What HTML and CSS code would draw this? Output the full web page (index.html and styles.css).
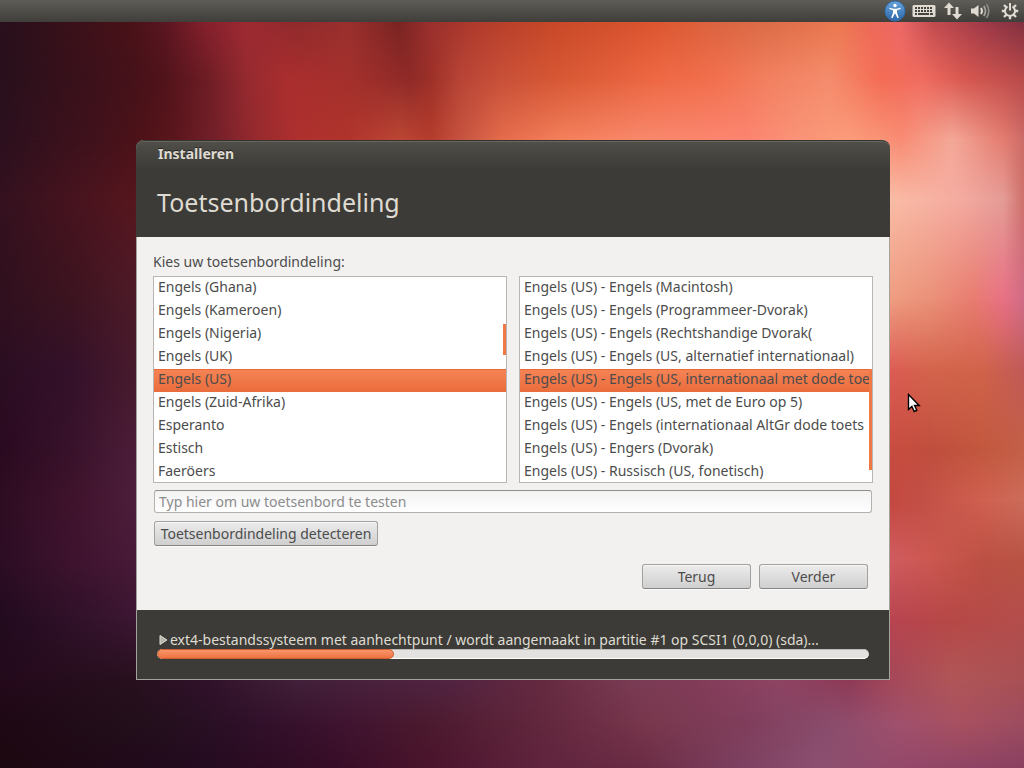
FILE: index.html
```html
<!DOCTYPE html>
<html lang="nl">
<head>
  <meta charset="UTF-8">
  <meta name="viewport" content="width=device-width, initial-scale=1.0">
  <title>Installeren</title>
  <link rel="stylesheet" href="styles.css">
</head>
<body>
  <div class="wallpaper" aria-hidden="true">
    <div class="band band-1"></div>
    <div class="band band-2"></div>
    <div class="band band-3"></div>
    <div class="band band-4"></div>
    <div class="band band-5"></div>
    <div class="band band-6"></div>
    <div class="band band-7"></div>
    <div class="band band-8"></div>
    <div class="band band-9"></div>
    <div class="band band-10"></div>
    <div class="band band-11"></div>
    <div class="band band-12"></div>
  </div>

  <header class="panel">
    <button class="indicator" aria-label="Toegankelijkheid">
      <svg width="22" height="22" viewBox="0 0 22 22">
        <defs>
          <linearGradient id="blue" x1="0" y1="0" x2="0" y2="1">
            <stop offset="0" stop-color="#6aa4dc"/>
            <stop offset="1" stop-color="#2c66a8"/>
          </linearGradient>
        </defs>
        <circle cx="11" cy="11" r="10" fill="url(#blue)" stroke="#2f6fb4"/>
        <circle cx="11" cy="5.500" r="1.700" fill="#fff"/>
        <path d="M5.500 7.800l4 1h3l4-1 .2 1.200-3.700 1.300v2.400l1.800 5-1.300.5-2.300-4.700h-.4l-2.300 4.700-1.300-.5 1.800-5v-2.400L5.300 9z" fill="#fff"/>
      </svg>
    </button>
    <button class="indicator" aria-label="Toetsenbord">
      <svg width="24" height="14" viewBox="0 0 24 14">
        <rect x="0.500" y="1" width="23" height="12" rx="1.500" fill="#dfdbd2"/>
        <path d="M3 4h18M3 7h18" stroke="#45443f" stroke-width="2" stroke-dasharray="2 1"/>
        <path d="M3 10h2M6 10h11M18 10h3" stroke="#45443f" stroke-width="2"/>
      </svg>
    </button>
    <button class="indicator" aria-label="Netwerk">
      <svg width="18" height="18" viewBox="0 0 18 18" fill="#dfdbd2">
        <path d="M5 0.500l5 5.500H6.500V13h-3V6H0z"/>
        <path d="M11.500 5h3v7H18L13 17.500 8 12h3.500z"/>
      </svg>
    </button>
    <button class="indicator" aria-label="Geluid">
      <svg width="20" height="18" viewBox="0 0 20 18" fill="none">
        <path d="M1 6.500h3L8.500 3v12L4 11.500H1z" fill="#dfdbd2"/>
        <path d="M11 6q2 3 0 6" stroke="#dfdbd2" stroke-width="2"/>
        <path d="M13.800 4q3.400 5 0 10" stroke="#a9a69f" stroke-width="1.700"/>
        <path d="M16.500 2q4.600 7 0 14" stroke="#8b8983" stroke-width="1.700"/>
      </svg>
    </button>
    <button class="indicator" aria-label="Sessie">
      <svg width="18" height="18" viewBox="0 0 18 18" fill="none" stroke="#dfdbd2">
        <path d="M6.500 4.600a5 5 0 1 0 5 0" stroke-width="2"/>
        <path d="M9 1v7.500" stroke-width="2"/>
        <path d="M3 3l2.500 2.500M15 3l-2.500 2.500M0.800 9h3.500M17.200 9h-3.500M3 15l2.500-2.500M15 15l-2.500-2.500M9 13.500v3.700" stroke-width="2.400"/>
      </svg>
    </button>
  </header>

  <main class="desktop">
    <form class="window">
      <div class="window-header">
        <div class="window-title">Installeren</div>
        <h1>Toetsenbordindeling</h1>
      </div>

      <div class="window-body">
        <label class="prompt" for="layout">Kies uw toetsenbordindeling:</label>
        <div class="lists">
          <div class="list">
            <select id="layout" size="9">
              <option>Engels (Ghana)</option>
              <option>Engels (Kameroen)</option>
              <option>Engels (Nigeria)</option>
              <option>Engels (UK)</option>
              <option selected>Engels (US)</option>
              <option>Engels (Zuid-Afrika)</option>
              <option>Esperanto</option>
              <option>Estisch</option>
              <option>Faeröers</option>
            </select>
            <span class="thumb thumb-layout"></span>
          </div>
          <div class="list">
            <select id="variant" size="9" aria-label="Variant">
              <option>Engels (US) - Engels (Macintosh)</option>
              <option>Engels (US) - Engels (Programmeer-Dvorak)</option>
              <option>Engels (US) - Engels (Rechtshandige Dvorak(</option>
              <option>Engels (US) - Engels (US, alternatief internationaal)</option>
              <option selected>Engels (US) - Engels (US, internationaal met dode toe</option>
              <option>Engels (US) - Engels (US, met de Euro op 5)</option>
              <option>Engels (US) - Engels (internationaal AltGr dode toets</option>
              <option>Engels (US) - Engers (Dvorak)</option>
              <option>Engels (US) - Russisch (US, fonetisch)</option>
            </select>
            <span class="thumb thumb-variant"></span>
          </div>
        </div>
        <input class="test-field" type="text" aria-label="Toetsenbord testen" placeholder="Typ hier om uw toetsenbord te testen">
        <button class="btn btn-detect" type="button">Toetsenbordindeling detecteren</button>
        <div class="actions">
          <button class="btn" type="button">Terug</button>
          <button class="btn" type="button">Verder</button>
        </div>
      </div>

      <div class="window-footer">
        <label class="status" for="progress">
          <svg width="9" height="10" viewBox="0 0 9 10">
            <path d="M1 0.500L8 5 1 9.500z" fill="#b5b2aa" stroke="#dfdbd2"/>
          </svg>
          <span>ext4-bestandssysteem met aanhechtpunt / wordt aangemaakt in partitie #1 op SCSI1 (0,0,0) (sda)...</span>
        </label>
        <progress id="progress" value="333" max="1000"></progress>
      </div>
    </form>
  </main>

  <svg class="pointer" width="14" height="21" viewBox="0 0 14 21" aria-hidden="true">
    <path d="M1.500 1.500v15l3.400-3 2.300 5 2.600-1.200-2.200-4.800h4.600z" fill="#fff" stroke="#000" stroke-width="1.400"/>
  </svg>
</body>
</html>
```
FILE: styles.css
```css
:root {
  --row-1: linear-gradient(to right, #28101c 0%, #4a1218 13%, #5a1622 16%, #84202c 20%, #9e2a32 24%, #902a2c 29%, #9a302e 34%, #7a2422 39%, #9a302e 42%, #b23c2c 47%, #c84828 54%, #dc5630 64%, #dc6440 70%, #dc6c48 75%, #ec7850 82%, #ee6a58 85%, #ec6868 88%, #c44c50 91%, #a03a48 96%, #823040 100%);
  --row-2: linear-gradient(to right, #28101c 0%, #46121a 13%, #50131a 16%, #6c1c24 20%, #942a30 24%, #aa2e2e 28%, #a4302c 34%, #8e2a28 40%, #9c3028 42%, #b84436 45%, #c85038 49%, #d85834 55%, #ee6844 64%, #f2704e 70%, #f28060 75%, #f48c6c 81%, #f46c54 86%, #f06c60 90%, #d85850 94%, #b84a4a 100%);
  --row-3: linear-gradient(to right, #2c101e 0%, #40121c 9%, #4e1218 14%, #5a161c 17%, #74202a 21%, #962a2e 25%, #ae302e 29%, #b0342c 34%, #bc4634 39%, #b43c2c 42%, #cc5a44 46%, #e46c4c 49%, #f4805c 55%, #f8886c 63%, #fc8470 73%, #f99478 78%, #fb9c7a 83%, #f88c74 88%, #f4a898 93%, #e47c70 98%, #cc6c68 100%);
  --row-4: linear-gradient(to right, #34111f 0%, #56161e 13%, #fabca6 87%, #f4aaa0 94%, #e49c96 98%, #ce706a 100%);
  --row-5: linear-gradient(to right, #30101e 0%, #3c1420 7%, #4c1a28 13%, #ee9c80 87%, #ea9078 91%, #e87c70 95%, #e87084 98%, #d06c88 100%);
  --row-6: linear-gradient(to right, #2b0e22 0%, #34112a 7%, #471a2c 13%, #dc5c54 87%, #d4644c 91%, #d0634a 96%, #c05a58 100%);
  --row-7: linear-gradient(to right, #2a0a20 0%, #38122a 7%, #4c1d38 13%, #c84c40 87%, #c04e3e 91%, #c2583e 96%, #c46048 100%);
  --row-8: linear-gradient(to right, #2e0d22 0%, #42142e 8%, #4c1e3a 13%, #c44840 87%, #c25046 90%, #d06050 96%, #cc6c5a 100%);
  --row-9: linear-gradient(to right, #2c0d24 0%, #3e132e 7%, #481a38 13%, #d05c60 87%, #cc5850 91%, #bc5044 96%, #b85444 100%);
  --row-10: linear-gradient(to right, #220b1e 0%, #3b1632 13%, #b84450 87%, #b64846 93%, #b44e4c 100%);
  --row-11: linear-gradient(to right, #240a1c 0%, #28101e 13%, #30122a 20%, #42203a 29%, #522442 44%, #662a40 53%, #7a3c54 62%, #823c58 68%, #8e4464 76%, #8e3a56 83%, #a4485a 87%, #b05658 93%, #a85054 100%);
  --row-12: linear-gradient(to right, #1e0814 0%, #24101e 16%, #30102a 25%, #401430 34%, #4c1a2e 42%, #662a40 55%, #7a384e 64%, #803e5c 73%, #8a4c6c 81%, #a0506c 88%, #a85060 94%, #9c4c60 100%);
  --row-13: linear-gradient(to right, #1c0810 0%, #240b20 20%, #360c26 32%, #4a142c 42%, #60243e 53%, #6a2c44 63%, #7c4060 72%, #8c5070 80%, #94486a 88%, #8a4060 100%);
}

* {
  box-sizing: border-box;
}
body {
  margin: 0;
  min-height: 100vh;
  font-family: "Noto Sans", "Open Sans", sans-serif;
  font-size: 14px;
  color: #4c4c4c;
  background: #3c1430;
}
button, input, select {
  font: inherit;
  color: inherit;
}

/* Wallpaper: every band fades from one row of colours into the next */
.wallpaper {
  position: fixed;
  inset: 22px 0 0;
  z-index: -1;
  display: flex;
  flex-direction: column;
}
.band {
  background: var(--from);
}
.band::before {
  content: "";
  display: block;
  height: 100%;
  background: var(--to);
  -webkit-mask-image: linear-gradient(transparent, #000);
  mask-image: linear-gradient(transparent, #000);
}
.band-1 { flex: 56; --from: var(--row-1); --to: var(--row-2); }
.band-2 { flex: 62; --from: var(--row-2); --to: var(--row-3); }
.band-3 { flex: 60; --from: var(--row-3); --to: var(--row-4); }
.band-4 { flex: 100; --from: var(--row-4); --to: var(--row-5); }
.band-5 { flex: 70; --from: var(--row-5); --to: var(--row-6); }
.band-6 { flex: 80; --from: var(--row-6); --to: var(--row-7); }
.band-7 { flex: 50; --from: var(--row-7); --to: var(--row-8); }
.band-8 { flex: 60; --from: var(--row-8); --to: var(--row-9); }
.band-9 { flex: 60; --from: var(--row-9); --to: var(--row-10); }
.band-10 { flex: 60; --from: var(--row-10); --to: var(--row-11); }
.band-11 { flex: 44; --from: var(--row-11); --to: var(--row-12); }
.band-12 { flex: 44; --from: var(--row-12); --to: var(--row-13); }

/* Top panel */
.panel {
  display: flex;
  justify-content: flex-end;
  align-items: center;
  gap: 8px;
  height: 22px;
  padding-right: 5px;
  background: linear-gradient(#5e5d57, #3f3e3a);
}
.indicator {
  display: flex;
  padding: 0;
  border: 0;
  background: none;
}
.indicator:first-child {
  margin-right: -2px;
}
.indicator:last-child {
  margin-left: 3px;
}

/* Installer window */
.desktop {
  display: flex;
  justify-content: center;
  padding: 118px 0 0 2px;
}
.window {
  width: 100%;
  max-width: 754px;
  border: 1px solid #a5a29b;
  border-top: 0;
  border-radius: 8px 8px 0 0;
  background: #f2f1f0;
}
.window-header {
  margin: 0 -1px;
  padding: 0 21px;
  height: 97px;
  border-radius: 8px 8px 0 0;
  border-top: 1px solid #35342f;
  background: linear-gradient(#504f49, #3c3b37 28px);
  box-shadow: inset 0 1px #66655e;
  color: #dfdbd2;
}
.window-title {
  padding-left: 1px;
  line-height: 26px;
  font-weight: bold;
  text-shadow: 0 -1px #22211e;
}
h1 {
  margin: 15px 0 0;
  font-size: 25px;
  font-weight: normal;
  line-height: 40px;
}
.window-body {
  padding: 15px 16px 21px;
}
.prompt {
  display: block;
  line-height: 20px;
  margin-bottom: 4px;
}
.lists {
  display: flex;
  gap: 12px;
}
.list {
  position: relative;
  flex: 1;
  min-width: 0;
}
select {
  display: block;
  width: 100%;
  height: 207px;
  padding: 0;
  border: 1px solid #b8b5b2;
  border-radius: 0;
  background: #fff;
  outline: 0;
  overflow: hidden;
  scrollbar-width: none;
}
option {
  height: 23px;
  min-height: 23px;
  padding: 0 4px;
  line-height: 24px;
}
option:checked {
  color: #4c4c4c;
  background: linear-gradient(#f58455, #ea6c3c);
  box-shadow: inset 0 1px #e8683a;
}
.thumb {
  position: absolute;
  right: 1px;
  width: 3px;
  background: #f07746;
}
.thumb-layout {
  top: 48px;
  height: 31px;
}
.thumb-variant {
  top: 93px;
  height: 101px;
}
.test-field {
  display: block;
  width: calc(100% - 2px);
  height: 23px;
  margin: 7px 1px 8px;
  padding: 0 4px;
  border: 1px solid #b5b2ae;
  border-top-color: #8f8d8a;
  border-radius: 3px;
  background: linear-gradient(#f3f3f3, #fff);
}
.test-field::placeholder {
  color: #8c8c8c;
}
.btn {
  width: 109px;
  height: 25px;
  padding: 0;
  border: 1px solid #a3a19e;
  border-bottom-color: #868482;
  border-radius: 3px;
  background: linear-gradient(#ececec, #cfcfcf);
  box-shadow: inset 0 1px #f8f8f8, 0 1px #fafafa;
  line-height: 22px;
}
.btn-detect {
  display: block;
  width: auto;
  min-width: 224px;
  margin-left: 1px;
  padding: 0 3px;
}
.actions {
  display: flex;
  justify-content: flex-end;
  gap: 8px;
  padding: 18px 5px 0 0;
}
.window-footer {
  height: 69px;
  padding: 20px 20px 0;
  background: #3c3b37;
  color: #dfdbd2;
}
.status {
  display: flex;
  align-items: center;
  gap: 2px;
  height: 19px;
  padding-left: 2px;
  white-space: nowrap;
}
progress {
  display: block;
  width: 100%;
  height: 10px;
  border: 0;
  border-radius: 5px;
  overflow: hidden;
  appearance: none;
  -webkit-appearance: none;
}
progress::-webkit-progress-bar {
  border-radius: 5px;
  background: #e4e2e0;
  box-shadow: inset 0 1px #bdbab5, inset 0 -1px #fff;
}
progress::-webkit-progress-value {
  border: 1px solid #cf5c30;
  border-radius: 5px;
  background: linear-gradient(#f9966b, #ee7342);
}

.pointer {
  position: absolute;
  left: 907px;
  top: 393px;
}
```
